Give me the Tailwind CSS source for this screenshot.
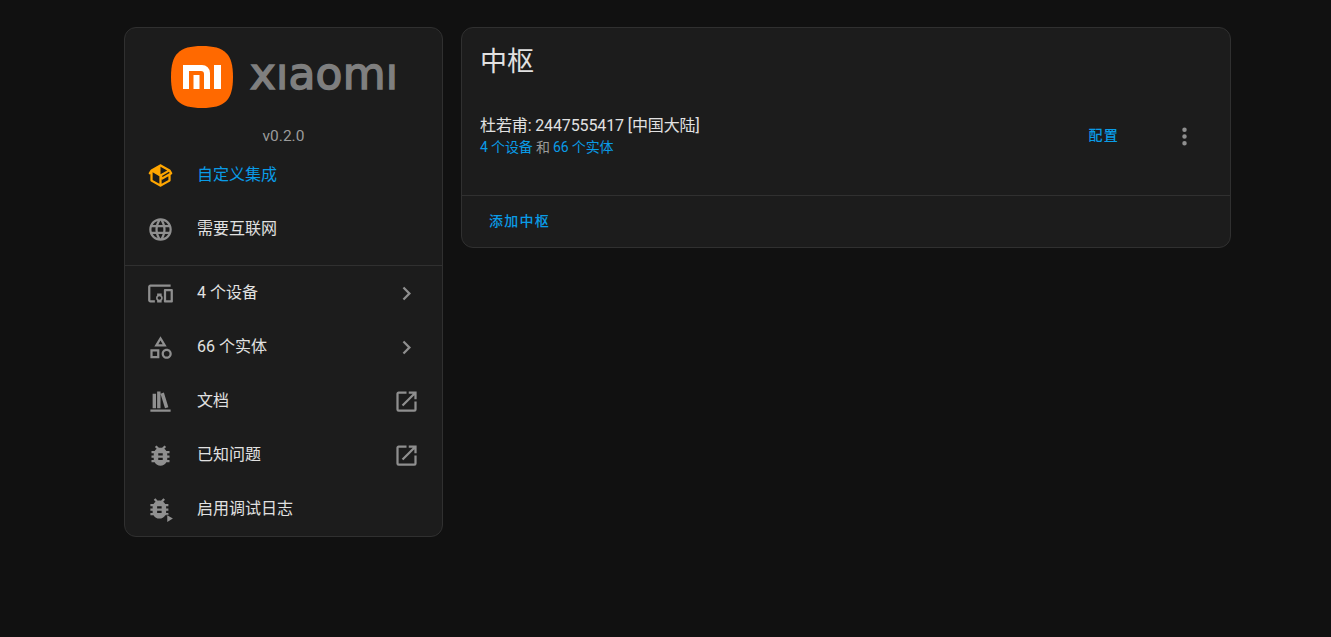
<!DOCTYPE html>
<html lang="zh-CN">

<head>
    <meta charset="UTF-8">
    <meta name="viewport" content="width=device-width, initial-scale=1.0">
    <title>Xiaomi Home</title>
    <script src="https://cdn.jsdelivr.net/npm/@tailwindcss/browser@4"></script>
</head>

<body class="h-[637px] overflow-hidden bg-[#111111] font-['Roboto','Noto_Sans_CJK_SC',sans-serif] text-[#e1e1e1]">

    <main class="ml-[124px] flex w-[1107px] items-start gap-[18px] pt-[27px]">

        <!-- Info card -->
        <section class="w-[319px] shrink-0 rounded-xl border border-[#303030] bg-[#1c1c1c]">
            <div class="flex items-center justify-center gap-[17px] pl-[2px] pt-[18px]">
                <svg class="h-[62px] w-[62px]" viewBox="0 0 62 62">
                    <path fill="#ff6900" d="M31 0C54 0 62 8 62 31C62 54 54 62 31 62C8 62 0 54 0 31C0 8 8 0 31 0Z" />
                    <path fill="#fff" d="M12 19H31a8 8 0 0 1 8 8V43H33V28a3 3 0 0 0-3-3H18V43H12ZM22.500 29H28.500V43H22.500ZM43 19H50V43H43Z" />
                </svg>
                <span class="-mt-[6px] font-['DejaVu_Sans',sans-serif] text-[44px] leading-[62px] tracking-[0.2px] text-[#7f7f7f] [-webkit-text-stroke:1.5px_#7f7f7f]">xıaomı</span>
            </div>
            <p class="mt-[18px] text-center text-[15.5px] leading-5 text-[#9b9b9b]">v0.2.0</p>

            <div class="mt-[2px]">
                <a class="flex h-[54px] items-center gap-[23px] pl-[22px] text-base text-[#0a9be6]">
                    <svg class="h-[27px] w-[27px] shrink-0" viewBox="0 0 24 24" fill="#ffa600"><path d="M2,10.96C1.5,10.68 1.35,10.07 1.63,9.59L3.13,7C3.24,6.8 3.41,6.66 3.6,6.58L11.43,2.18C11.59,2.06 11.79,2 12,2C12.21,2 12.41,2.06 12.57,2.18L20.47,6.62C20.66,6.72 20.82,6.88 20.91,7.08L22.36,9.6C22.64,10.08 22.47,10.69 22,10.96L21,11.54V16.5C21,16.88 20.79,17.21 20.47,17.38L12.57,21.82C12.41,21.94 12.21,22 12,22C11.79,22 11.59,21.94 11.43,21.82L3.53,17.38C3.21,17.21 3,16.88 3,16.5V10.96C2.7,11.13 2.32,11.14 2,10.96M12,4.15V4.15L12,10.85V10.85L17.96,7.5L12,4.15M5,15.91L11,19.29V12.58L5,9.21V15.91M19,15.91V12.69L14,15.59C13.67,15.77 13.3,15.76 13,15.6V19.29L19,15.91M13.85,13.36L20.13,9.73L19.55,8.72L13.27,12.35L13.85,13.36Z" /></svg>
                    <span>自定义集成</span>
                </a>
                <div class="flex h-[54px] items-center gap-[23px] pl-[22px] text-base">
                    <svg class="h-[27px] w-[27px] shrink-0" viewBox="0 0 24 24" fill="#8f8f8f"><path d="M16.36,14C16.44,13.34 16.5,12.68 16.5,12C16.5,11.32 16.44,10.66 16.36,10H19.74C19.9,10.64 20,11.31 20,12C20,12.69 19.9,13.36 19.74,14M14.59,19.56C15.19,18.45 15.65,17.25 15.97,16H18.92C17.96,17.65 16.43,18.93 14.59,19.56M14.34,14H9.66C9.56,13.34 9.5,12.68 9.5,12C9.5,11.32 9.56,10.65 9.66,10H14.34C14.43,10.65 14.5,11.32 14.5,12C14.5,12.68 14.43,13.34 14.34,14M12,19.96C11.17,18.76 10.5,17.43 10.09,16H13.91C13.5,17.43 12.83,18.76 12,19.96M8,8H5.08C6.03,6.34 7.57,5.06 9.4,4.44C8.8,5.55 8.35,6.75 8,8M5.08,16H8C8.35,17.25 8.8,18.45 9.4,19.56C7.57,18.93 6.03,17.65 5.08,16M4.26,14C4.1,13.36 4,12.69 4,12C4,11.31 4.1,10.64 4.26,10H7.64C7.56,10.66 7.5,11.32 7.5,12C7.5,12.68 7.56,13.34 7.64,14M12,4.03C12.83,5.23 13.5,6.57 13.91,8H10.09C10.5,6.57 11.17,5.23 12,4.03M18.92,8H15.97C15.65,6.75 15.19,5.55 14.59,4.44C16.43,5.07 17.96,6.34 18.92,8M12,2C6.47,2 2,6.5 2,12A10,10 0 0,0 12,22A10,10 0 0,0 22,12A10,10 0 0,0 12,2Z" /></svg>
                    <span>需要互联网</span>
                </div>
            </div>

            <div class="mt-[9px] border-t border-[#303030]">
                <a class="flex h-[54px] items-center gap-[23px] pl-[22px] pr-[22px] text-base">
                    <svg class="h-[27px] w-[27px] shrink-0" viewBox="0 0 24 24" fill="#8f8f8f"><path d="M3 6H21V4H3C1.9 4 1 4.9 1 6V18C1 19.1 1.9 20 3 20H7V18H3V6M13 12H9V13.78C8.39 14.33 8 15.11 8 16C8 16.89 8.39 17.67 9 18.22V20H13V18.22C13.61 17.67 14 16.88 14 16S13.61 14.33 13 13.78V12M11 17.5C10.17 17.5 9.5 16.83 9.5 16S10.17 14.5 11 14.5 12.5 15.17 12.5 16 11.83 17.5 11 17.5M22 8H16C15.5 8 15 8.5 15 9V19C15 19.5 15.5 20 16 20H22C22.5 20 23 19.5 23 19V9C23 8.5 22.5 8 22 8M21 18H17V10H21V18Z" /></svg>
                    <span class="flex-1">4 个设备</span>
                    <svg class="h-[27px] w-[27px] shrink-0" viewBox="0 0 24 24" fill="#8f8f8f"><path d="M8.59,16.58L13.17,12L8.59,7.41L10,6L16,12L10,18L8.59,16.58Z" /></svg>
                </a>
                <a class="flex h-[54px] items-center gap-[23px] pl-[22px] pr-[22px] text-base">
                    <svg class="h-[27px] w-[27px] shrink-0" viewBox="0 0 24 24" fill="#8f8f8f"><path d="M11,13.5V21.5H3V13.5H11M9,15.5H5V19.5H9V15.5M12,2L17.5,11H6.5L12,2M12,5.86L10.08,9H13.92L12,5.86M17.5,13C20,13 22,15 22,17.5C22,20 20,22 17.5,22C15,22 13,20 13,17.5C13,15 15,13 17.5,13M17.5,15A2.5,2.5 0 0,0 15,17.5A2.5,2.5 0 0,0 17.5,20A2.5,2.5 0 0,0 20,17.5A2.5,2.5 0 0,0 17.5,15Z" /></svg>
                    <span class="flex-1">66 个实体</span>
                    <svg class="h-[27px] w-[27px] shrink-0" viewBox="0 0 24 24" fill="#8f8f8f"><path d="M8.59,16.58L13.17,12L8.59,7.41L10,6L16,12L10,18L8.59,16.58Z" /></svg>
                </a>
                <a class="flex h-[54px] items-center gap-[23px] pl-[22px] pr-[22px] text-base">
                    <svg class="h-[27px] w-[27px] shrink-0" viewBox="0 0 24 24" fill="#8f8f8f"><path d="M9 3V18H12V3H9M12 5L16 18L19 17L15 4L12 5M5 5V18H8V5H5M3 19V21H21V19H3Z" /></svg>
                    <span class="flex-1">文档</span>
                    <svg class="h-[27px] w-[27px] shrink-0" viewBox="0 0 24 24" fill="#8f8f8f"><path d="M14,3V5H17.59L7.76,14.83L9.17,16.24L19,6.41V10H21V3M19,19H5V5H12V3H5C3.89,3 3,3.9 3,5V19A2,2 0 0,0 5,21H19A2,2 0 0,0 21,19V12H19V19Z" /></svg>
                </a>
                <a class="flex h-[54px] items-center gap-[23px] pl-[22px] pr-[22px] text-base">
                    <svg class="h-[27px] w-[27px] shrink-0" viewBox="0 0 24 24" fill="#8f8f8f"><path d="M14,12H10V10H14M14,16H10V14H14M20,8H17.19C16.74,7.22 16.12,6.55 15.37,6.04L17,4.41L15.59,3L13.42,5.17C12.96,5.06 12.5,5 12,5C11.5,5 11.04,5.06 10.59,5.17L8.41,3L7,4.41L8.62,6.04C7.88,6.55 7.26,7.22 6.81,8H4V10H6.09C6.04,10.33 6,10.66 6,11V12H4V14H6V15C6,15.34 6.04,15.67 6.09,16H4V18H6.81C7.85,19.79 9.78,21 12,21C14.22,21 16.15,19.79 17.19,18H20V16H17.91C17.96,15.67 18,15.34 18,15V14H20V12H18V11C18,10.66 17.96,10.33 17.91,10H20V8Z" /></svg>
                    <span class="flex-1">已知问题</span>
                    <svg class="h-[27px] w-[27px] shrink-0" viewBox="0 0 24 24" fill="#8f8f8f"><path d="M14,3V5H17.59L7.76,14.83L9.17,16.24L19,6.41V10H21V3M19,19H5V5H12V3H5C3.89,3 3,3.9 3,5V19A2,2 0 0,0 5,21H19A2,2 0 0,0 21,19V12H19V19Z" /></svg>
                </a>
                <a class="flex h-[54px] items-center gap-[23px] pl-[22px] text-base">
                    <svg class="h-[27px] w-[27px] shrink-0" viewBox="0 0 24 24" fill="#8f8f8f">
                        <path transform="translate(-1 -1)" d="M14,12H10V10H14M14,16H10V14H14M20,8H17.19C16.74,7.22 16.12,6.55 15.37,6.04L17,4.41L15.59,3L13.42,5.17C12.96,5.06 12.5,5 12,5C11.5,5 11.04,5.06 10.59,5.17L8.41,3L7,4.41L8.62,6.04C7.88,6.55 7.26,7.22 6.81,8H4V10H6.09C6.04,10.33 6,10.66 6,11V12H4V14H6V15C6,15.34 6.04,15.67 6.09,16H4V18H6.81C7.85,19.79 9.78,21 12,21C14.22,21 16.15,19.79 17.19,18H20V16H17.91C17.96,15.67 18,15.34 18,15V14H20V12H18V11C18,10.66 17.96,10.33 17.91,10H20V8Z" />
                        <path stroke="#1c1c1c" stroke-width="1" paint-order="stroke" d="M18 17V23L23 20Z" />
                    </svg>
                    <span>启用调试日志</span>
                </a>
            </div>
        </section>

        <!-- Hub card -->
        <section class="w-[770px] shrink-0 rounded-xl border border-[#303030] bg-[#1c1c1c]">
            <h1 class="pl-[18px] pt-[16px] text-[27px] leading-9">中枢</h1>
            <div class="mt-[26px] flex h-[60px] items-center pl-[18px]">
                <div class="flex-1">
                    <p class="text-base leading-[22px] tracking-[-0.12px]">杜若甫: 2447555417 [中国大陆]</p>
                    <p class="text-sm leading-[20px] tracking-[-0.15px] text-[#9b9b9b]"><a class="text-[#0a9be6]">4 个设备</a> 和 <a class="text-[#0a9be6]">66 个实体</a></p>
                </div>
                <button class="mb-[2px] mr-[52px] text-sm font-medium tracking-[1.25px] text-[#0a9be6]">配置</button>
                <svg class="mr-[32px] h-[27px] w-[27px] shrink-0" viewBox="0 0 24 24" fill="#8f8f8f"><path d="M12,16A2,2 0 0,1 14,18A2,2 0 0,1 12,20A2,2 0 0,1 10,18A2,2 0 0,1 12,16M12,10A2,2 0 0,1 14,12A2,2 0 0,1 12,14A2,2 0 0,1 10,12A2,2 0 0,1 12,10M12,4A2,2 0 0,1 14,6A2,2 0 0,1 12,8A2,2 0 0,1 10,6A2,2 0 0,1 12,4Z" /></svg>
            </div>
            <div class="mt-[29px] flex h-[52px] items-center border-t border-[#303030] pl-[27px]">
                <button class="mb-[2px] text-sm font-medium tracking-[1.25px] text-[#0a9be6]">添加中枢</button>
            </div>
        </section>

    </main>

</body>

</html>
